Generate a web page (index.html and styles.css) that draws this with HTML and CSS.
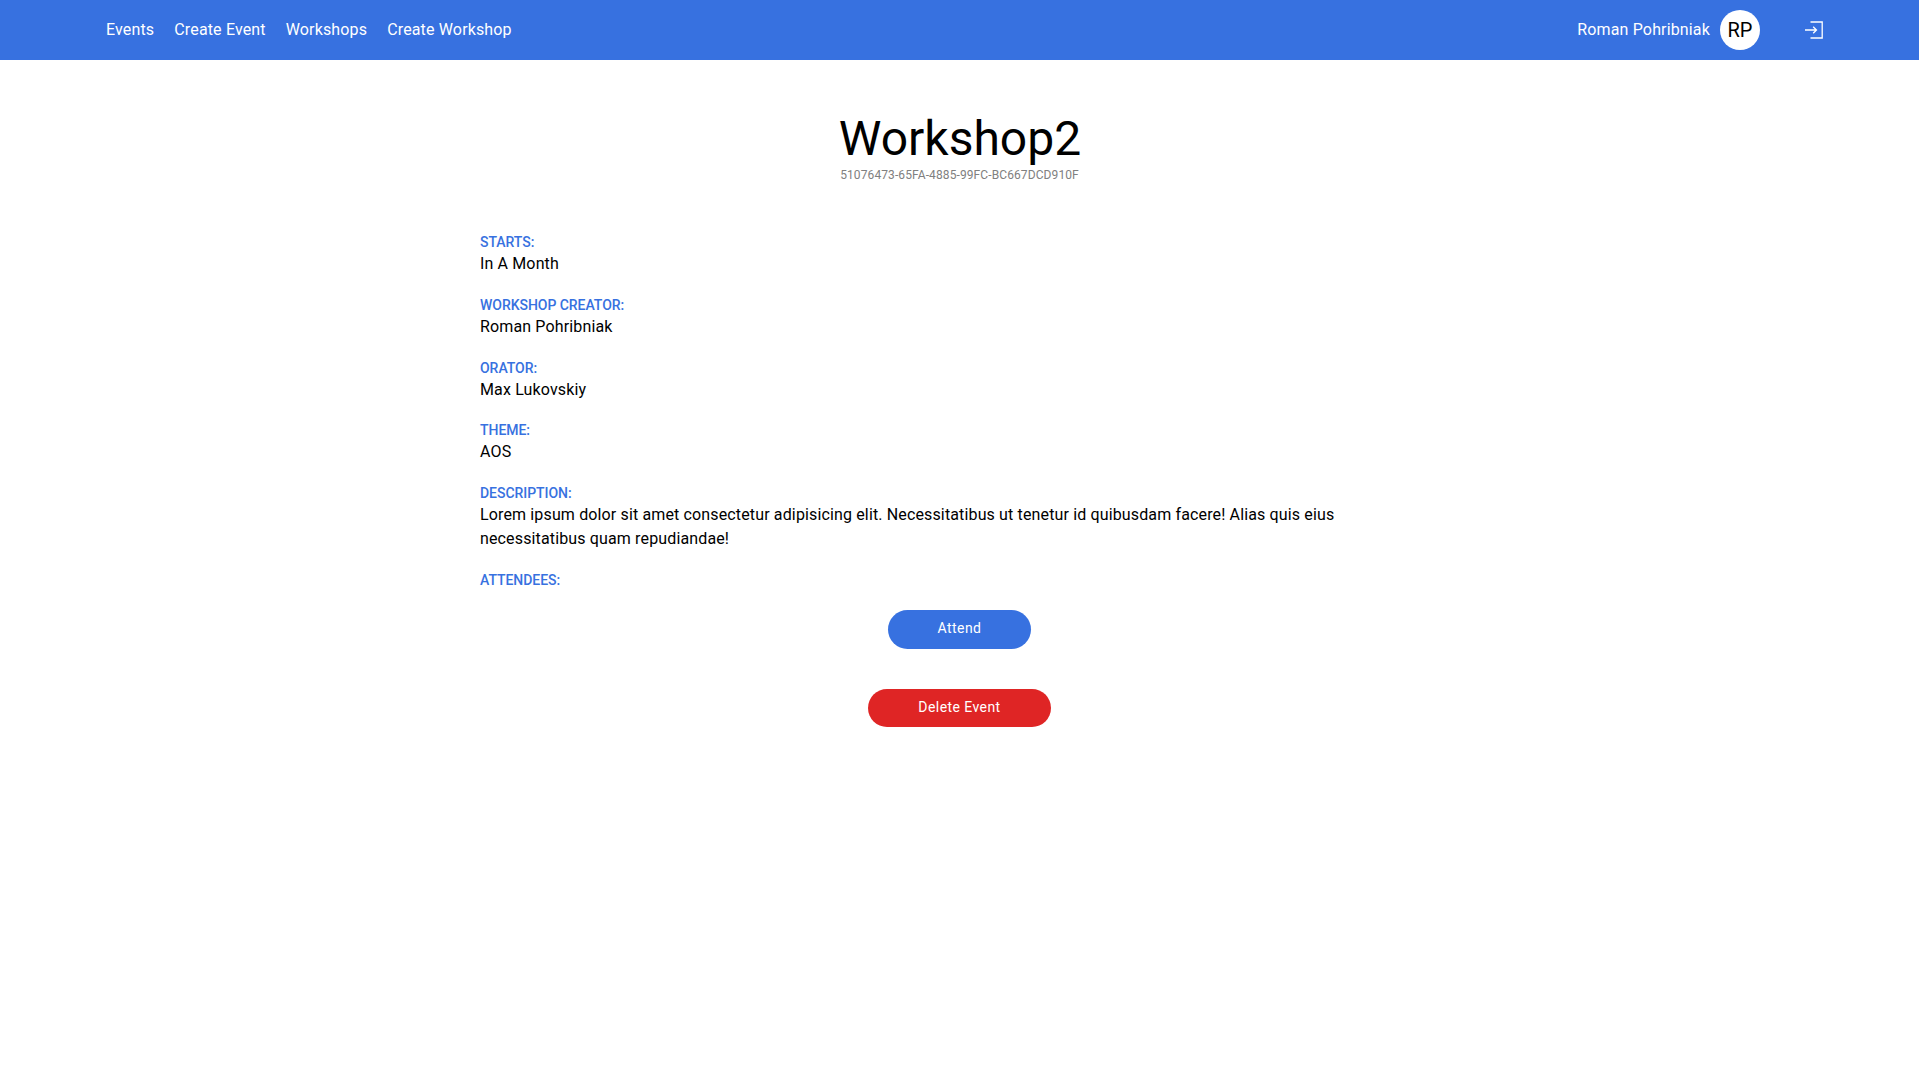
FILE: index.html
```
<!DOCTYPE html>
<html lang="en">
<head>
<meta charset="utf-8">
<title>Workshop2</title>
<link rel="stylesheet" href="styles.css">
</head>
<body>
<header class="navbar">
  <nav class="nav-links"><a>Events</a><a>Create Event</a><a>Workshops</a><a>Create Workshop</a></nav>
  <div class="user">
    <span class="user-name">Roman Pohribniak</span>
    <span class="avatar">RP</span>
    <svg class="logout" viewBox="0 0 20 20" fill="none" stroke="currentColor" stroke-width="1.3"><path d="M6.5 2h11.7v16H6.5M1 10h11.5M9.2 6.7 12.5 10l-3.3 3.3"/></svg>
  </div>
</header>
<main class="page">
  <h1 class="title">Workshop2</h1>
  <p class="uuid">51076473-65FA-4885-99FC-BC667DCD910F</p>
  <dl class="details">
    <div class="field"><dt>STARTS:</dt><dd>In A Month</dd></div>
    <div class="field"><dt>WORKSHOP CREATOR:</dt><dd>Roman Pohribniak</dd></div>
    <div class="field"><dt>ORATOR:</dt><dd>Max Lukovskiy</dd></div>
    <div class="field"><dt>THEME:</dt><dd>AOS</dd></div>
    <div class="field"><dt>DESCRIPTION:</dt><dd>Lorem ipsum dolor sit amet consectetur adipisicing elit. Necessitatibus ut tenetur id quibusdam facere! Alias quis eius necessitatibus quam repudiandae!</dd></div>
    <div class="field"><dt>ATTENDEES:</dt></div>
  </dl>
  <div class="actions">
    <button class="btn attend">Attend</button>
    <button class="btn delete">Delete Event</button>
  </div>
</main>
</body>
</html>
```
FILE: styles.css
```
* { box-sizing: border-box; margin: 0; padding: 0; }
body { font: 16px/24px Roboto, sans-serif; color: #000; background: #fff; }
.navbar { display: flex; justify-content: space-between; align-items: center; height: 60px; padding: 0 95px 0 106px; background: #3771e0; color: #fff; letter-spacing: .15px; }
.nav-links { display: flex; gap: 20px; }
.user { display: flex; align-items: center; }
.avatar { width: 40px; height: 40px; margin: 0 44px 0 10px; border-radius: 50%; background: #fff; color: #000; font-size: 20px; letter-spacing: 0; line-height: 40px; text-align: center; }
.logout { width: 20px; height: 20px; }
.page { width: 959px; margin: 0 auto; padding-top: 49px; }
.title { font-size: 48px; font-weight: 400; line-height: 60px; text-align: center; text-indent: 1px; }
.uuid { margin-top: -1px; font-size: 12px; line-height: 14px; letter-spacing: .1px; color: #808080; text-align: center; }
.details { margin-top: 50px; }
.field { margin-bottom: 18.75px; }
.field dt { font-size: 14px; line-height: 20px; font-weight: 500; letter-spacing: -.04px; color: #3771e0; }
.field dd { letter-spacing: .14px; }
.actions { display: flex; flex-direction: column; align-items: center; gap: 40px; padding-top: 1.5px; }
.btn { height: 38.5px; padding: 0 50px 2px; border: 0; border-radius: 20px; font: 400 14px Roboto, sans-serif; letter-spacing: .43px; color: #fff; }
.attend { background: #3771e0; }
.delete { background: #df2525; }
```
